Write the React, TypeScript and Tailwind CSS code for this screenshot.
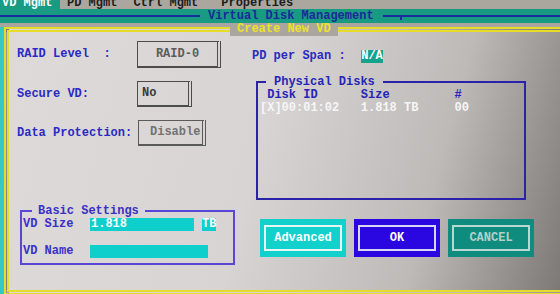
import React from "react";

export default function App() {
  return (
    <div className="w-[560px] h-[294px] overflow-hidden bg-[#aaa69f] font-['Liberation_Mono',monospace] font-bold text-[12px] leading-[13px]">
      {/* menu tabs, cut at the top edge */}
      <div className="flex h-[9px] overflow-hidden bg-[#aca79e] text-[#1c1c1c]">
        <div className="w-[60px] bg-[#199a83] pl-[2px] text-white">
          <span className="block -mt-[2px] leading-[11px]">VD Mgmt</span>
        </div>
        <span className="ml-[7px] -mt-[2px] leading-[11px]">PD Mgmt</span>
        <span className="ml-[16px] -mt-[2px] leading-[11px]">Ctrl Mgmt</span>
        <span className="ml-[23px] -mt-[2px] leading-[11px]">Properties</span>
      </div>

      {/* title band */}
      <div className="flex h-[14px] items-center bg-[#199a83]">
        <div className="h-[2px] w-[200px] bg-[#1a2c9c]" />
        <span className="pl-[8px] pr-[9px] text-[#1a2a98]">Virtual Disk Management</span>
        <div className="relative h-[2px] flex-1 bg-[#1a2c9c]">
          <div className="absolute left-[17px] top-0 h-[5px] w-[2px] bg-[#1a2c9c]" />
        </div>
      </div>

      <div className="flex">
        <div className="mt-[4px] h-[268px] w-[4px] bg-[#34c9c1]" />
        <fieldset className="min-w-0 flex-1 border-[5px] border-r-0 border-double border-[#e6dc2a] bg-[linear-gradient(105deg,#dedad9_0%,#d8d4d3_45%,#bebab8_75%,#7c7977_100%)]">
          <legend className="ml-[221px] bg-[#aaa69f] px-[7px] leading-[13px] text-[#ece22a]">Create New VD</legend>
          <div className="flex h-[248px]">
            {/* left column */}
            <div className="w-[243px] pl-[8px] pt-[5px] text-[#2a2ac4]">
              <div className="flex h-[27px] items-center">
                <span className="w-[120px] whitespace-pre">RAID Level  :</span>
                <div className="flex h-[27px] w-[84px] items-center justify-center border border-b-2 border-r-4 border-[#4c4c4c] [border-right-style:double] text-[#5c5c5c]">
                  RAID-0
                </div>
              </div>
              <div className="mt-[13px] flex h-[26px] items-center">
                <span className="w-[120px]">Secure VD:</span>
                <div className="flex h-[26px] w-[55px] items-center border border-b-2 border-r-4 border-[#4c4c4c] pl-[4px] [border-right-style:double] text-[#3a3a3a]">
                  No
                </div>
              </div>
              <div className="mt-[13px] flex h-[26px] items-center">
                <span className="w-[121px]">Data Protection:</span>
                <div className="flex h-[26px] w-[68px] items-center border border-b-2 border-r-4 border-[#5a5a5a] pl-[11px] [border-right-style:double] text-[#727272]">
                  Disable
                </div>
              </div>

              <fieldset className="ml-[3px] mt-[58px] w-[215px] border-2 border-[#5a46d6] pb-[5px] text-[#3a30c8]">
                <legend className="ml-[10px] px-[6px] leading-[14px]">Basic Settings</legend>
                <div className="flex h-[13px] items-center pl-[1px]">
                  <span className="w-[67px]">VD Size</span>
                  <span className="h-[13px] w-[104px] bg-[#0fcfcc] pl-[1px] text-white">1.818</span>
                  <span className="ml-[8px] h-[13px] bg-[#0fcfcc] text-white">TB</span>
                </div>
                <div className="mt-[14px] flex h-[13px] items-center pl-[1px]">
                  <span className="w-[67px]">VD Name</span>
                  <span className="h-[13px] w-[118px] bg-[#0fcfcc]" />
                </div>
              </fieldset>
            </div>

            {/* right column */}
            <div className="flex-1 pt-[14px]">
              <div className="flex h-[13px] items-center text-[#2a2ac4]">
                <span className="w-[109px] whitespace-pre">PD per Span :</span>
                <span className="h-[13px] w-[22px] bg-[#15a38f] text-center text-white">N/A</span>
              </div>

              <fieldset className="ml-[4px] mt-[12px] w-[270px] border-2 border-[#2a22a8]">
                <legend className="ml-[8px] px-[8px] leading-[14px] text-[#2525b8]">Physical Disks</legend>
                <div className="h-[109px] whitespace-pre pl-[2px]">
                  <div className="text-[#2525b8]">{" Disk ID      Size         #"}</div>
                  <div className="text-[#f6f6f6]">{"[X]00:01:02   1.818 TB     00"}</div>
                </div>
              </fieldset>

              <div className="ml-[8px] mt-[19px] flex gap-[8px]">
                <div className="h-[38px] w-[86px] bg-[#12d0cc] px-[4px] py-[6px]">
                  <div className="flex h-full items-center justify-center border-2 border-[#e4f6f6] text-white">Advanced</div>
                </div>
                <div className="h-[38px] w-[86px] bg-[#2a06e0] px-[4px] py-[6px]">
                  <div className="flex h-full items-center justify-center border-2 border-[#d6d6f2] text-white">OK</div>
                </div>
                <div className="h-[38px] w-[86px] bg-[#0f8c7e] px-[4px] py-[6px]">
                  <div className="flex h-full items-center justify-center border-2 border-[#b8d8d2] text-[#b4d0c8]">CANCEL</div>
                </div>
              </div>
            </div>
          </div>
        </fieldset>
      </div>
    </div>
  );
}
